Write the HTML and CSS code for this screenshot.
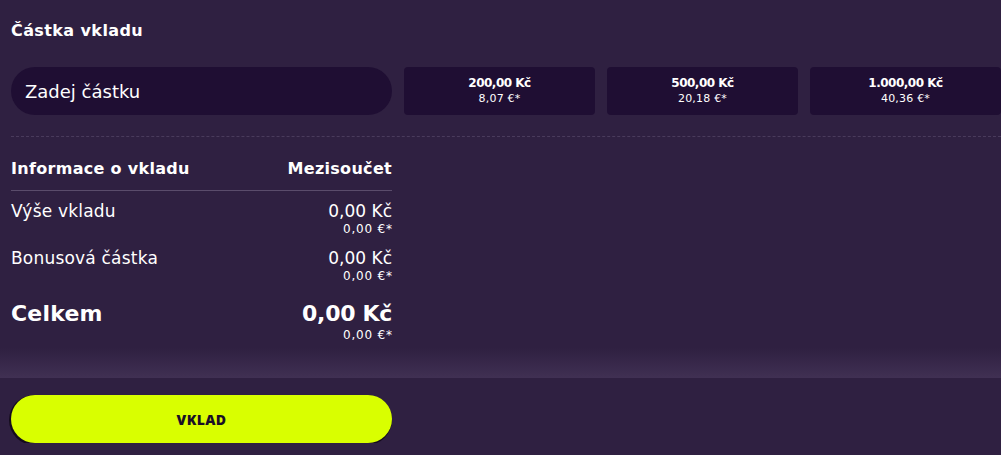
FILE: index.html
```html
<!DOCTYPE html>
<html lang="cs">
<head>
  <meta charset="UTF-8">
  <meta name="viewport" content="width=device-width, initial-scale=1.0">
  <title>Částka vkladu</title>
  <link rel="stylesheet" href="styles.css">
</head>
<body>

<div class="deposit">
  <h2 class="deposit-title">Částka vkladu</h2>

  <div class="amount-row">
    <input type="text" class="amount-input" placeholder="Zadej částku">
    <button type="button" class="preset">
      <span class="preset-main">200,00 Kč</span>
      <span class="preset-sub">8,07 €*</span>
    </button>
    <button type="button" class="preset">
      <span class="preset-main">500,00 Kč</span>
      <span class="preset-sub">20,18 €*</span>
    </button>
    <button type="button" class="preset">
      <span class="preset-main">1.000,00 Kč</span>
      <span class="preset-sub">40,36 €*</span>
    </button>
  </div>

  <div class="divider"></div>

  <div class="summary">
    <div class="summary-head">
      <span>Informace o vkladu</span>
      <span>Mezisoučet</span>
    </div>
    <div class="summary-row">
      <span class="label">Výše vkladu</span>
      <span class="value">0,00 Kč<small>0,00 €*</small></span>
    </div>
    <div class="summary-row">
      <span class="label">Bonusová částka</span>
      <span class="value">0,00 Kč<small>0,00 €*</small></span>
    </div>
    <div class="summary-row total">
      <span class="label">Celkem</span>
      <span class="value">0,00 Kč<small>0,00 €*</small></span>
    </div>
  </div>
</div>

<div class="footer">
  <button type="button" class="submit">VKLAD</button>
</div>

</body>
</html>
```

FILE: styles.css
```css
body {
  margin: 0;
  background-color: #2f2041;
  color: #ffffff;
  font-family: "DejaVu Sans", "Open Sans", sans-serif;
  overflow: hidden;
}
.deposit {
  padding: 19px 0 0 11px;
  height: 378px;
  box-sizing: border-box;
  background: linear-gradient(to bottom, #2f2041 0, #2f2041 348px, #403053 378px);
}
.deposit-title {
  margin: 0;
  font-size: 16px;
  font-weight: 700;
  line-height: 24px;
  letter-spacing: 0.4px;
}
.amount-row {
  display: grid;
  grid-template-columns: 381px 191px 191px 191px;
  gap: 12px;
  margin-top: 24px;
}
.amount-input {
  height: 48px;
  border: none;
  border-radius: 24px;
  background-color: #1f0e33;
  padding: 0 14px;
  font-family: inherit;
  font-size: 18px;
  color: #ffffff;
  outline: none;
}
.amount-input::placeholder {
  color: #ffffff;
}
.preset {
  display: flex;
  flex-direction: column;
  align-items: center;
  justify-content: center;
  height: 48px;
  border: none;
  border-radius: 4px;
  background-color: #1f0e33;
  color: #ffffff;
  font-family: inherit;
  cursor: pointer;
}
.preset-main {
  font-size: 12px;
  font-weight: 700;
  line-height: 15px;
  letter-spacing: -0.5px;
}
.preset-sub {
  font-size: 11px;
  line-height: 15px;
  letter-spacing: 0.2px;
}
.divider {
  margin-top: 21px;
  border-top: 1px dashed #4a3b5c;
}
.summary {
  width: 381px;
  padding-top: 10px;
}
.summary-head {
  display: flex;
  justify-content: space-between;
  height: 43px;
  align-items: center;
  border-bottom: 1px solid #5a4c6b;
  font-size: 16px;
  font-weight: 700;
  letter-spacing: 0.3px;
}
.summary-row {
  display: flex;
  justify-content: space-between;
  margin-top: 9px;
  font-size: 17px;
  line-height: 22px;
}
.summary-row .label {
  letter-spacing: 0.2px;
}
.summary-row .value {
  display: flex;
  flex-direction: column;
  align-items: flex-end;
}
.summary-row small {
  font-size: 12px;
  line-height: 15px;
  letter-spacing: 0.8px;
  margin-right: -0.8px;
}
.summary-row + .summary-row {
  margin-top: 10px;
}
.summary-row.total {
  margin-top: 16px;
  font-size: 22px;
  font-weight: 700;
  line-height: 28px;
  letter-spacing: -0.3px;
}
.summary-row.total small {
  font-weight: 400;
  letter-spacing: 0.8px;
}
.footer {
  padding: 17px 0 0 11px;
}
.submit {
  width: 381px;
  height: 48px;
  border: none;
  border-radius: 24px;
  background-color: #d9ff00;
  box-shadow: -1px 1px 0 1px #140b1c;
  color: #1a1026;
  font-family: "Open Sans", sans-serif;
  font-size: 14px;
  font-weight: 800;
  letter-spacing: 0.4px;
  cursor: pointer;
}
```
